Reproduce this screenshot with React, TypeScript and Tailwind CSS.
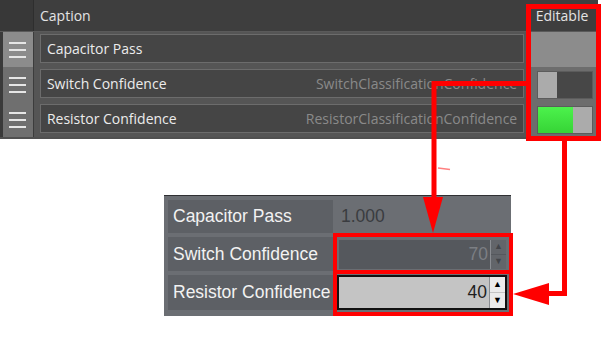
import React from "react";

const topFont = { fontFamily: '"Open Sans", "Noto Sans", sans-serif' };

const Handle = ({ active }: { active?: boolean }) => (
  <div
    className={`w-[30px] h-full flex flex-col justify-center items-center gap-[5px] ${
      active ? "bg-[#8c8c8c]" : "bg-[#6f6f6f]"
    }`}
  >
    <div className="w-[17px] h-[2px] bg-[#e6e6e6]"></div>
    <div className="w-[17px] h-[2px] bg-[#e6e6e6]"></div>
    <div className="w-[17px] h-[2px] bg-[#e6e6e6]"></div>
  </div>
);

const Toggle = ({ on }: { on: boolean }) => (
  <div className="w-[56px] h-[28px] border border-[#5c5c5c] flex">
    {on ? (
      <>
        <div className="flex-1 bg-gradient-to-b from-[#4cf24c] to-[#36d436]"></div>
        <div className="w-[19px] bg-[#ababab]"></div>
      </>
    ) : (
      <>
        <div className="w-[19px] bg-[#ababab]"></div>
        <div className="flex-1 bg-[#474747]"></div>
      </>
    )}
  </div>
);

interface RowProps {
  caption: string;
  hint?: string;
  active?: boolean;
  toggle?: boolean;
}

const GridRow = ({ caption, hint, active, toggle }: RowProps) => (
  <div className="flex h-[35px] items-stretch">
    <div className="w-[3px] bg-[#3a3a3a]"></div>
    <Handle active={active} />
    <div className="w-[1px] bg-[#3c3c3c]"></div>
    <div className="w-[494px] pl-[6px] pr-[2px] py-[2px] bg-[#555555]">
      <div className="h-[29px] border border-[#6c6c6c] bg-[#454545] flex items-center justify-between px-[6px] text-[14px]">
        <span className="text-[#ececec]">{caption}</span>
        {hint && <span className="text-[#8a8a8a]">{hint}</span>}
      </div>
    </div>
    <div className="w-[3px] bg-[#555555]"></div>
    <div
      className={`w-[69px] flex items-center pl-[8px] ${
        active ? "bg-[#8c8c8c]" : "bg-[#6d6d6d]"
      }`}
    >
      {toggle !== undefined && <Toggle on={toggle} />}
    </div>
  </div>
);

const Spinner = ({ light }: { light?: boolean }) => {
  const btn = light
    ? "bg-[#ececec] text-black"
    : "bg-[#62656a] text-[#42454a]";
  return (
    <div className="w-[16px] h-full flex flex-col gap-[1px] border-l border-[#8a8d92]">
      <div className={`flex-1 flex items-center justify-center text-[9px] leading-none ${btn}`}>▲</div>
      <div className={`flex-1 flex items-center justify-center text-[9px] leading-none ${btn}`}>▼</div>
    </div>
  );
};

const FormRow = ({
  label,
  height,
  children,
}: {
  label: string;
  height: string;
  children: React.ReactNode;
}) => (
  <div className={`flex items-stretch gap-[4px] ${height}`}>
    <div className="w-[165px] shrink-0 bg-[#5d6065] flex items-center pl-[5px] text-[17.5px] text-[#f2f2f2]">
      {label}
    </div>
    <div className="flex-1 flex items-center">{children}</div>
  </div>
);

export default function App() {
  return (
    <div className="relative w-[601px] h-[352px] bg-white overflow-hidden">
      {/* grid screenshot */}
      <div className="w-[598px] bg-[#505050] pb-[2px]" style={topFont}>
        <div className="flex h-[32px] border-b border-[#5a5a5a]">
          <div className="w-[34px] bg-[#383838] border-r border-[#2e2e2e]"></div>
          <div className="flex-1 bg-[#3e3e3e] flex items-center pl-[6px] text-[14px] text-[#e4e4e4]">
            Caption
          </div>
          <div className="w-[72px] bg-[#3e3e3e] flex items-center justify-center text-[14px] text-[#e4e4e4]">
            Editable
          </div>
        </div>
        <GridRow caption="Capacitor Pass" active />
        <GridRow caption="Switch Confidence" hint="SwitchClassificationConfidence" toggle={false} />
        <GridRow caption="Resistor Confidence" hint="ResistorClassificationConfidence" toggle={true} />
      </div>

      {/* property panel screenshot */}
      <div
        className="ml-[164px] mt-[56px] w-[347px] h-[121px] bg-[#6b6e73] border-t border-[#2f3033] px-[4px] pt-[4px] flex flex-col gap-[4px]"
        style={{ fontFamily: '"Liberation Sans", Arial, sans-serif' }}
      >
        <FormRow label="Capacitor Pass" height="h-[33px]">
          <span className="pl-[4px] text-[17.5px] text-[#3a3c40]">1.000</span>
        </FormRow>
        <FormRow label="Switch Confidence" height="h-[34px]">
          <div className="w-[169px] h-[31px] ml-[1px] border border-[#6a6d72] bg-[#55585d] flex items-stretch justify-end">
            <span className="flex items-center pr-[2px] text-[17.5px] text-[#7c7f84]">70</span>
            <Spinner />
          </div>
        </FormRow>
        <FormRow label="Resistor Confidence" height="h-[35px]">
          <div className="w-[170px] h-[35px] border-2 border-[#111111] bg-[#c4c4c4] flex items-stretch justify-end">
            <span className="flex items-center pr-[2px] text-[17.5px] text-[#1e1e1e]">40</span>
            <Spinner light />
          </div>
        </FormRow>
      </div>

      {/* annotations */}
      <svg
        className="absolute left-0 top-0 pointer-events-none"
        width="601"
        height="352"
        viewBox="0 0 601 352"
      >
        <rect x="528.5" y="6.5" width="70" height="132" fill="none" stroke="#ff0000" strokeWidth="5" />
        <path d="M528 83.5 H434 V200" fill="none" stroke="#ff0000" strokeWidth="5" />
        <polygon points="423,197 443,197 433,233" fill="#ff0000" />
        <rect x="335" y="235" width="176" height="37" fill="none" stroke="#ff0000" strokeWidth="4" />
        <rect x="335" y="272" width="176" height="42" fill="none" stroke="#ff0000" strokeWidth="4" />
        <path d="M564.5 140 V293.5 H546" fill="none" stroke="#ff0000" strokeWidth="5" />
        <polygon points="549,283 549,305 513,294" fill="#ff0000" />
        <line x1="438" y1="168" x2="450" y2="169.5" stroke="#ff8080" strokeWidth="1.5" />
      </svg>
    </div>
  );
}
